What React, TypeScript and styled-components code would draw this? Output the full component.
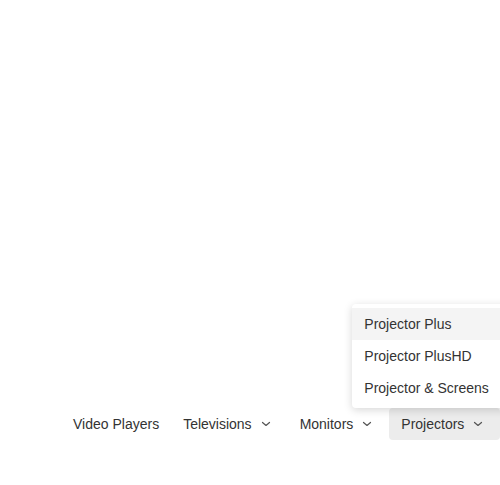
import React from "react";
import styled, { createGlobalStyle } from "styled-components";

const Global = createGlobalStyle`
  html, body { margin: 0; padding: 0; background: #fff; }
  body { font-family: "Liberation Sans", Arial, sans-serif; overflow: hidden; }
`;

const Page = styled.div`
  width: 500px;
  height: 485px;
  overflow: hidden;
  padding-top: 408px;
  box-sizing: border-box;
`;

const NavList = styled.ul`
  display: flex;
  align-items: center;
  list-style: none;
  margin: 0;
  padding: 0 0 0 61px;
`;

const NavItem = styled.li`
  position: relative;
`;

const Trigger = styled.button<{ $active?: boolean; $hasIcon?: boolean }>`
  display: flex;
  align-items: center;
  height: 32px;
  padding: 0 ${(p) => (p.$hasIcon ? "14px" : "12px")} 0 12px;
  border: none;
  border-radius: 4px;
  background: ${(p) => (p.$active ? "#ececec" : "transparent")};
  color: #333;
  font-family: "Liberation Sans", Arial, sans-serif;
  font-size: 14px;
  white-space: nowrap;
  cursor: pointer;
`;

const Chevron = styled.svg`
  width: 16px;
  height: 16px;
  margin-left: 6px;
  flex: none;
`;

const Panel = styled.div`
  position: absolute;
  bottom: 32px;
  left: -37px;
  width: 160px;
  padding: 4px 0;
  background: #fff;
  border-radius: 4px;
  box-shadow: 0 2px 8px rgba(0, 0, 0, 0.16);
`;

const PanelItem = styled.div<{ $highlight?: boolean }>`
  height: 32px;
  display: flex;
  align-items: center;
  padding: 0 12px;
  font-size: 14px;
  color: #333;
  white-space: nowrap;
  background: ${(p) => (p.$highlight ? "#f4f4f4" : "transparent")};
`;

const ChevronIcon = () => (
  <Chevron viewBox="0 0 16 16" fill="none">
    <path d="M4.5 6.5 L8 9.5 L11.5 6.5" stroke="#555" strokeWidth="1.2" strokeLinecap="round" strokeLinejoin="round" />
  </Chevron>
);

export default function App() {
  return (
    <>
      <Global />
      <Page>
        <NavList>
          <NavItem>
            <Trigger>Video Players</Trigger>
          </NavItem>
          <NavItem>
            <Trigger $hasIcon>
              Televisions
              <ChevronIcon />
            </Trigger>
          </NavItem>
          <NavItem>
            <Trigger $hasIcon>
              Monitors
              <ChevronIcon />
            </Trigger>
          </NavItem>
          <NavItem>
            <Trigger $hasIcon $active>
              Projectors
              <ChevronIcon />
            </Trigger>
            <Panel>
              <PanelItem $highlight>Projector Plus</PanelItem>
              <PanelItem>Projector PlusHD</PanelItem>
              <PanelItem>Projector &amp; Screens</PanelItem>
            </Panel>
          </NavItem>
        </NavList>
      </Page>
    </>
  );
}
